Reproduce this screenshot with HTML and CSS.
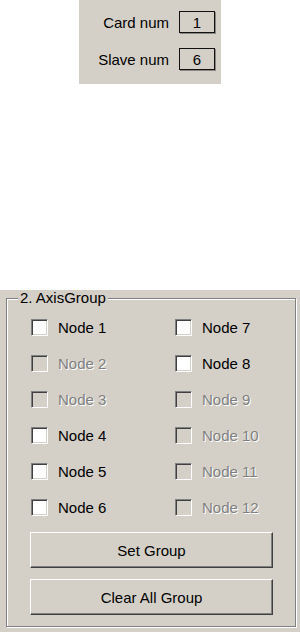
FILE: index.html
```html
<!DOCTYPE html>
<html>

<head>
  <title>Axis Group</title>
  <link rel="stylesheet" href="styles.css">
</head>

<body>
  <div class="card-panel">
    <div class="field-row">
      <span class="field-label">Card num</span>
      <span class="field-box">1</span>
    </div>
    <div class="field-row">
      <span class="field-label">Slave num</span>
      <span class="field-box">6</span>
    </div>
  </div>

  <div class="group-area">
    <fieldset class="axis-group">
      <legend>2. AxisGroup</legend>
      <div class="node-grid">
        <label class="node"><span class="check"></span><span class="node-name">Node 1</span></label>
        <label class="node disabled"><span class="check"></span><span class="node-name">Node 2</span></label>
        <label class="node disabled"><span class="check"></span><span class="node-name">Node 3</span></label>
        <label class="node"><span class="check"></span><span class="node-name">Node 4</span></label>
        <label class="node"><span class="check"></span><span class="node-name">Node 5</span></label>
        <label class="node"><span class="check"></span><span class="node-name">Node 6</span></label>
        <label class="node"><span class="check"></span><span class="node-name">Node 7</span></label>
        <label class="node"><span class="check"></span><span class="node-name">Node 8</span></label>
        <label class="node disabled"><span class="check"></span><span class="node-name">Node 9</span></label>
        <label class="node disabled"><span class="check"></span><span class="node-name">Node 10</span></label>
        <label class="node disabled"><span class="check"></span><span class="node-name">Node 11</span></label>
        <label class="node disabled"><span class="check"></span><span class="node-name">Node 12</span></label>
      </div>
      <button class="win-button set-button">Set Group</button>
      <button class="win-button clear-button">Clear All Group</button>
    </fieldset>
  </div>
</body>

</html>
```

FILE: styles.css
```css
/* classic windows greys */
:root {
  --face: #d4d0c8;
  --shadow: #808080;
  --dark-shadow: #404040;
  --highlight: #ffffff;
}

body {
  margin: 0;
  background-color: #fff;
  font-family: "Liberation Sans", Arial, sans-serif;
  font-size: 15px;
  color: #000;
}

/* Card / slave numbers */
.card-panel {
  margin-left: 79px;
  width: 142px;
  height: 84px;
  box-sizing: border-box;
  padding: 11px 6px 0 0;
  background-color: var(--face);
  display: flex;
  flex-direction: column;
  gap: 15px;
}

.field-row {
  display: flex;
  justify-content: flex-end;
  align-items: center;
  gap: 10px;
  height: 22px;
}

.field-box {
  width: 36px;
  height: 22px;
  box-sizing: border-box;
  border: 1px solid #111;
  box-shadow: 1px 1px 0 #8a8782;
  display: flex;
  align-items: center;
  justify-content: center;
}

/* Axis group box */
.group-area {
  margin-top: 206px;
  height: 342px;
  box-sizing: border-box;
  padding: 0 4px 0 6px;
  background-color: var(--face);
}

.axis-group {
  margin: 0;
  padding: 0;
  min-width: 0;
  border: 1px solid var(--shadow);
  box-shadow: inset 1px 1px 0 var(--highlight), 1px 1px 0 var(--highlight);
}

.axis-group legend {
  margin-left: 11px;
  padding: 0 2px;
  line-height: 16px;
  background-color: var(--face);
}

.node-grid {
  margin-top: 3px;
  padding-left: 24px;
  display: grid;
  grid-template-columns: 144px 1fr;
  grid-template-rows: repeat(6, 36px);
  grid-auto-flow: column;
}

.node {
  display: flex;
  align-items: center;
  gap: 10px;
}

.check {
  width: 17px;
  height: 17px;
  box-sizing: border-box;
  background-color: #fff;
  border: 1px solid;
  border-color: var(--shadow) var(--highlight) var(--highlight) var(--shadow);
  box-shadow: inset 1px 1px 0 var(--dark-shadow), inset -1px -1px 0 var(--face);
}

.node.disabled .check {
  background-color: var(--face);
}

.node.disabled .node-name {
  color: var(--shadow);
  text-shadow: 1px 1px 0 var(--highlight);
}

/* Buttons */
.win-button {
  display: block;
  width: 243px;
  height: 36px;
  margin-left: 23px;
  padding: 0;
  font: inherit;
  color: #000;
  background-color: var(--face);
  border: 1px solid;
  border-color: var(--highlight) var(--dark-shadow) var(--dark-shadow) var(--highlight);
  box-shadow: inset -1px -1px 0 var(--shadow), inset 1px 1px 0 var(--face);
}

.set-button {
  margin-top: 7px;
}

.clear-button {
  margin-top: 11px;
  margin-bottom: 11px;
}
```
